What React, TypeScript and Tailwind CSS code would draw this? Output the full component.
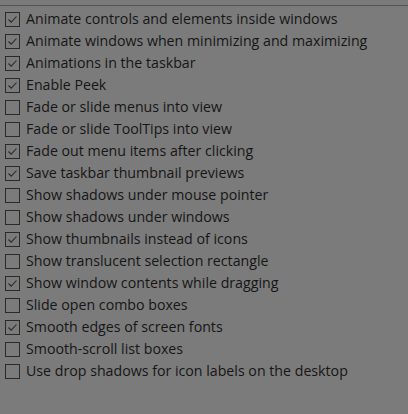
const items: [string, boolean][] = [
  ['Animate controls and elements inside windows', true],
  ['Animate windows when minimizing and maximizing', true],
  ['Animations in the taskbar', true],
  ['Enable Peek', true],
  ['Fade or slide menus into view', false],
  ['Fade or slide ToolTips into view', false],
  ['Fade out menu items after clicking', true],
  ['Save taskbar thumbnail previews', true],
  ['Show shadows under mouse pointer', false],
  ['Show shadows under windows', false],
  ['Show thumbnails instead of icons', true],
  ['Show translucent selection rectangle', false],
  ['Show window contents while dragging', true],
  ['Slide open combo boxes', false],
  ['Smooth edges of screen fonts', true],
  ['Smooth-scroll list boxes', false],
  ['Use drop shadows for icon labels on the desktop', false],
];

function Box({ checked }: { checked: boolean }) {
  return (
    <span className="flex h-[15px] w-[15px] shrink-0 items-center justify-center border border-[#2a2a2a]">
      {checked && (
        <svg width="11" height="11" viewBox="0 0 11 11" fill="none">
          <path d="M1.5 5.5 L4.2 8.2 L9.5 2.5" stroke="#2a2a2a" strokeWidth="1.1" />
        </svg>
      )}
    </span>
  );
}

export default function App() {
  return (
    <div className="h-[414px] w-[408px] overflow-hidden bg-[#7b7b7b] pt-[5px] font-['Open_Sans',sans-serif]">
      <div className="border-t border-[#555555] pt-[2px]">
        {items.map(([label, checked]) => (
          <div key={label} className="flex h-[22px] items-center gap-[6px] pl-[5px]">
            <Box checked={checked} />
            <span className="text-[14.2px] leading-none text-[#161616] whitespace-nowrap">{label}</span>
          </div>
        ))}
      </div>
    </div>
  );
}
